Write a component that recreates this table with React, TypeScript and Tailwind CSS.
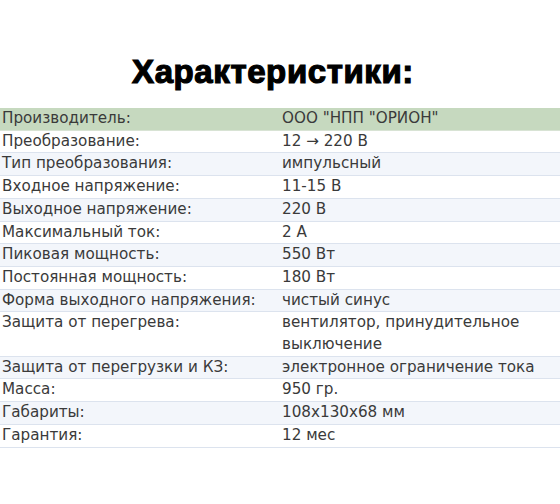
import React, { FC } from 'react';

interface SpecRow {
  label: string;
  value: string;
}

const specs: SpecRow[] = [
  { label: 'Производитель:', value: 'ООО "НПП "ОРИОН"' },
  { label: 'Преобразование:', value: '12 → 220 В' },
  { label: 'Тип преобразования:', value: 'импульсный' },
  { label: 'Входное напряжение:', value: '11-15 В' },
  { label: 'Выходное напряжение:', value: '220 В' },
  { label: 'Максимальный ток:', value: '2 А' },
  { label: 'Пиковая мощность:', value: '550 Вт' },
  { label: 'Постоянная мощность:', value: '180 Вт' },
  { label: 'Форма выходного напряжения:', value: 'чистый синус' },
  { label: 'Защита от перегрева:', value: 'вентилятор, принудительное выключение' },
  { label: 'Защита от перегрузки и КЗ:', value: 'электронное ограничение тока' },
  { label: 'Масса:', value: '950 гр.' },
  { label: 'Габариты:', value: '108x130x68 мм' },
  { label: 'Гарантия:', value: '12 мес' },
];

const App: FC = () => (
  <div className="h-[504px] w-[560px] bg-white">
    <h1
      className="pr-[14px] pt-[52px] text-center text-[33px] font-bold leading-[40px] tracking-[0.6px] text-black [-webkit-text-stroke:1.2px_black]"
      style={{ fontFamily: '"Liberation Sans", sans-serif' }}
    >
      Характеристики:
    </h1>
    <div
      className="mt-[16px] text-[15.2px] leading-[21.7px] text-[#3a3a3a]"
      style={{ fontFamily: '"DejaVu Sans", sans-serif' }}
    >
      {specs.map((row, i) => (
        <div
          key={i}
          className={
            i === 0
              ? 'flex border-b border-[#d8e3d4] bg-[#c6d9bf]'
              : i % 2 === 0
                ? 'flex border-b border-[#dce3ee] bg-[#f3f6fb]'
                : 'flex border-b border-[#dce3ee] bg-white'
          }
        >
          <div className="w-[282px] shrink-0 pl-[2px]">{row.label}</div>
          <div className="flex-1 pr-2">{row.value}</div>
        </div>
      ))}
    </div>
  </div>
);

export default App;
